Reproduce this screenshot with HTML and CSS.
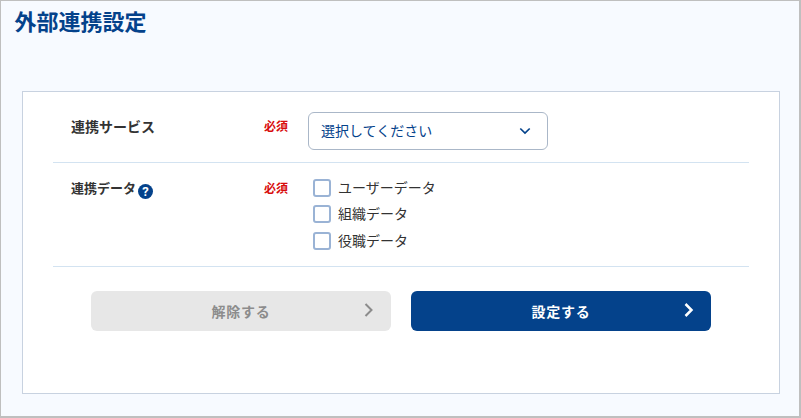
FILE: index.html
```html
<!DOCTYPE html>
<html lang="ja">
<head>
    <meta charset="UTF-8">
    <meta name="viewport" content="width=device-width, initial-scale=1.0">
    <title>外部連携設定</title>
    <link rel="stylesheet" href="styles.css">
</head>
<body>
    <h1 class="page-title">外部連携設定</h1>
    <form class="card">
        <div class="row row-service">
            <div class="label">連携サービス</div>
            <div class="required">必須</div>
            <button type="button" class="select">
                <span>選択してください</span>
                <svg width="12" height="8" viewBox="0 0 12 8"><path d="M1.3 1.5 6 6l4.7-4.5"/></svg>
            </button>
        </div>
        <div class="row row-data">
            <div class="label label-small">
                <span>連携データ</span>
                <span class="help">?</span>
            </div>
            <div class="required">必須</div>
            <div class="checks">
                <label class="check"><input type="checkbox"><span>ユーザーデータ</span></label>
                <label class="check"><input type="checkbox"><span>組織データ</span></label>
                <label class="check"><input type="checkbox"><span>役職データ</span></label>
            </div>
        </div>
        <div class="buttons">
            <button type="button" class="btn btn-off">
                <span>解除する</span>
                <svg width="10" height="14" viewBox="0 0 10 14"><path d="M1.5 1 7.5 7l-6 6"/></svg>
            </button>
            <button type="button" class="btn btn-main">
                <span>設定する</span>
                <svg width="10" height="14" viewBox="0 0 10 14"><path d="M1.5 1 7.5 7l-6 6"/></svg>
            </button>
        </div>
    </form>
</body>
</html>
```
FILE: styles.css
```css
* {
    box-sizing: border-box;
}
body {
    margin: 0;
    height: 418px;
    padding: 3px 19px 0 21px;
    background: #f7faff;
    border: solid #bfbfbf;
    border-width: 1px 2px 2px 1px;
    color: #333;
    font-family: "Noto Sans CJK JP", sans-serif;
    font-size: 14px;
    overflow: hidden;
}
button {
    font-family: inherit;
    cursor: pointer;
}
svg {
    fill: none;
    stroke: currentColor;
    stroke-width: 2;
}
.page-title {
    margin: 0 0 0 -7.5px;
    height: 87px;
    color: #04428b;
    font-size: 22px;
    font-weight: 700;
    line-height: 32px;
}
.card {
    width: 758px;
    height: 303px;
    padding: 0 30px;
    background: #fff;
    border: 1px solid #c8d2e0;
}
.row {
    display: flex;
    align-items: flex-start;
    padding-left: 18px;
    border-bottom: 1px solid #d3e3f1;
}
.row-service {
    height: 71px;
    padding-top: 20px;
}
.row-data {
    height: 104px;
    padding-top: 15px;
}
.label {
    display: flex;
    width: 193px;
    padding-top: 4px;
    font-weight: 700;
    line-height: 20px;
}
.label-small {
    padding-top: 0;
    font-size: 13px;
}
.help {
    width: 15px;
    height: 15px;
    margin: 6px 0 0 2px;
    border-radius: 50%;
    background: #04428b;
    color: #fff;
    font-family: Roboto, sans-serif;
    font-size: 13px;
    line-height: 16px;
    text-align: center;
}
.required {
    width: 44px;
    padding-top: 4px;
    color: #d80c0c;
    font-size: 12px;
    font-weight: 700;
    line-height: 20px;
}
.row-data .required {
    padding-top: 0;
}
.select {
    display: flex;
    align-items: center;
    justify-content: space-between;
    width: 240px;
    height: 38px;
    padding: 0 16px 0 12px;
    background: #fff;
    border: 1px solid #aab7c8;
    border-radius: 6px;
    color: #04428b;
    font-size: 14px;
}
.select span {
    padding-bottom: 2px;
}
.select svg {
    stroke-width: 1.7;
}
.checks {
    display: flex;
    flex-direction: column;
    gap: 8.4px;
    padding: 1px 0 0 5px;
}
.check {
    display: flex;
    align-items: center;
    height: 18px;
}
.check span {
    padding-bottom: 2px;
}
.check input {
    appearance: none;
    width: 18px;
    height: 18px;
    margin: 0 7px 0 0;
    background: #fff;
    border: 2px solid #9ab3d5;
    border-radius: 3px;
}
.buttons {
    display: flex;
    gap: 20px;
    padding: 24px 0 0 38px;
}
.btn {
    display: flex;
    align-items: center;
    width: 300px;
    height: 40px;
    padding: 0 17px;
    border: 0;
    border-radius: 6px;
    font-size: 14px;
    font-weight: 700;
    letter-spacing: 0.7px;
}
.btn span {
    flex: 1;
    padding-left: 10px;
    text-align: center;
}
.btn svg {
    margin-bottom: 2px;
}
.btn-off {
    background: #e7e7e7;
    color: #8c8c8c;
}
.btn-main {
    background: #04428b;
    color: #fff;
}
.btn-main svg {
    stroke-width: 2.5;
}
```
